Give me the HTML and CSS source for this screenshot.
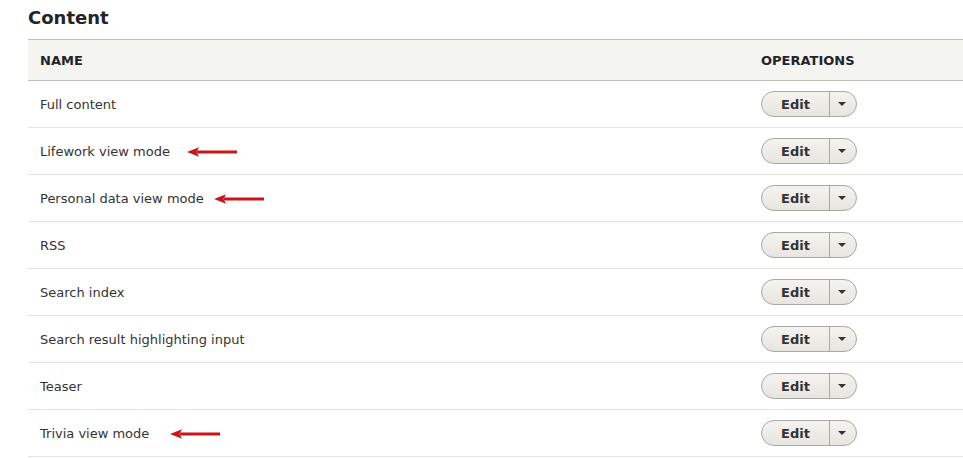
FILE: index.html
```html
<!DOCTYPE html>
<html>
<head>
<meta charset="utf-8">
<link rel="stylesheet" href="styles.css">
</head>
<body>
<h2 class="title">Content</h2>
<table class="grid">
  <thead>
    <tr><th class="col-name">Name</th><th class="col-ops">Operations</th></tr>
  </thead>
  <tbody>
    <tr><td>Full content</td><td class="ops"><span class="split"><span class="edit">Edit</span><span class="more"><span class="caret"></span></span></span></td></tr>
    <tr><td>Lifework view mode<span class="arrow a1"><svg width="50" height="10" viewBox="0 0 50 10"><path d="M10 3.5 H50 V6.5 H10 Z" fill="#c8161b"/><path d="M0 5 L12 0.3 L9.5 5 L12 9.7 Z" fill="#c8161b"/></svg></span></td><td class="ops"><span class="split"><span class="edit">Edit</span><span class="more"><span class="caret"></span></span></span></td></tr>
    <tr><td>Personal data view mode<span class="arrow a2"><svg width="50" height="10" viewBox="0 0 50 10"><path d="M10 3.5 H50 V6.5 H10 Z" fill="#c8161b"/><path d="M0 5 L12 0.3 L9.5 5 L12 9.7 Z" fill="#c8161b"/></svg></span></td><td class="ops"><span class="split"><span class="edit">Edit</span><span class="more"><span class="caret"></span></span></span></td></tr>
    <tr><td>RSS</td><td class="ops"><span class="split"><span class="edit">Edit</span><span class="more"><span class="caret"></span></span></span></td></tr>
    <tr><td>Search index</td><td class="ops"><span class="split"><span class="edit">Edit</span><span class="more"><span class="caret"></span></span></span></td></tr>
    <tr><td>Search result highlighting input</td><td class="ops"><span class="split"><span class="edit">Edit</span><span class="more"><span class="caret"></span></span></span></td></tr>
    <tr><td>Teaser</td><td class="ops"><span class="split"><span class="edit">Edit</span><span class="more"><span class="caret"></span></span></span></td></tr>
    <tr><td>Trivia view mode<span class="arrow a3"><svg width="50" height="10" viewBox="0 0 50 10"><path d="M10 3.5 H50 V6.5 H10 Z" fill="#c8161b"/><path d="M0 5 L12 0.3 L9.5 5 L12 9.7 Z" fill="#c8161b"/></svg></span></td><td class="ops"><span class="split"><span class="edit">Edit</span><span class="more"><span class="caret"></span></span></span></td></tr>
  </tbody>
</table>
</body>
</html>
```
FILE: styles.css
```css
html, body {
  margin: 0;
  padding: 0;
  background: #fff;
}
body {
  font-family: "DejaVu Sans", "Liberation Sans", sans-serif;
  color: #222330;
  font-size: 13px;
}
.title {
  margin: 0;
  padding: 7px 0 0 28px;
  height: 39px;
  box-sizing: border-box;
  font-size: 18px;
  line-height: 22px;
  font-weight: bold;
  color: #232429;
}
.grid {
  margin-left: 28px;
  width: 935px;
  border-collapse: collapse;
}
.grid th {
  background: #f4f4f0;
  border-top: 1px solid #bfbfba;
  border-bottom: 1px solid #bfbfba;
  text-align: left;
  text-transform: uppercase;
  font-size: 13px;
  font-weight: bold;
  height: 41px;
  padding: 0 12px;
  box-sizing: border-box;
  color: #232429;
}
.grid th.col-ops {
  width: 214px;
  padding-left: 12px;
}
.grid td {
  height: 47px;
  box-sizing: border-box;
  border-bottom: 1px solid #e6e4df;
  padding: 0 12px;
  vertical-align: middle;
  color: #333;
}
.grid td.ops {
  padding-left: 12px;
}
.split {
  display: inline-flex;
  height: 26px;
  box-sizing: border-box;
  border: 1px solid #a8a8a4;
  border-radius: 13px;
  background: linear-gradient(#f4f3ef, #e6e5df);
  vertical-align: middle;
  overflow: hidden;
}
.edit {
  width: 67px;
  display: flex;
  align-items: center;
  justify-content: center;
  font-weight: bold;
  font-size: 13px;
  color: #333;
  border-right: 1px solid #a8a8a4;
}
.more {
  width: 26px;
  display: flex;
  align-items: center;
  justify-content: center;
}
.caret {
  width: 0;
  height: 0;
  border-left: 4px solid transparent;
  border-right: 4px solid transparent;
  border-top: 4px solid #333;
  margin-right: 2px;
}
.arrow {
  display: inline-block;
  vertical-align: middle;
  line-height: 0;
}
.arrow svg { display: block; }
.a1 { margin-left: 17px; }
.a2 { margin-left: 10px; }
.a3 { margin-left: 21px; }
```
